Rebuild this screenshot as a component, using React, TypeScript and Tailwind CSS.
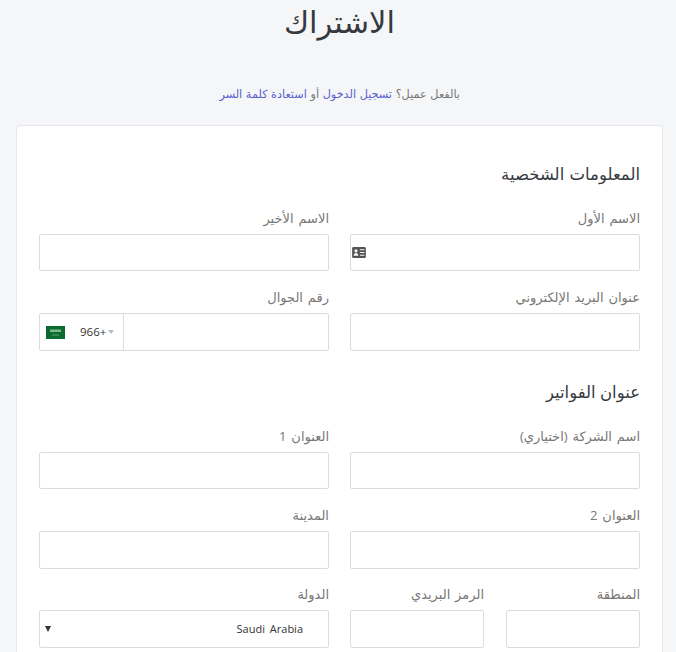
const font = { fontFamily: '"Open Sans", "DejaVu Sans", sans-serif' }

function Field({ label, children, tall, className = '' }: { label: string; children?: React.ReactNode; tall?: boolean; className?: string }) {
  return (
    <div className={className}>
      <label className="block h-[24px] text-[13px] leading-[24px] text-[#777] [word-spacing:1.5px]">{label}</label>
      <div className={`relative mt-[4px] rounded-[2px] border border-[#dcdcdc] bg-white ${tall ? 'h-[38px]' : 'h-[37px]'}`}>{children}</div>
    </div>
  )
}

export default function App() {
  return (
    <div dir="rtl" style={font} className="h-[652px] overflow-hidden bg-[#f5f6f8]">
      <h1 className="h-[42px] pr-[281px] text-right text-[30.5px] leading-[42px] text-[#36393f]">الاشتراك</h1>
      <p className="mt-[41px] h-[22px] pr-[216px] text-[11.25px] leading-[22px] text-[#777] [word-spacing:0.7px]">
        بالفعل عميل؟ <span className="text-[#5a5fd0]">تسجيل الدخول</span> أو{' '}
        <span className="text-[#5a5fd0]">استعادة كلمة السر</span>
      </p>
      <div className="ml-[16px] mr-[13px] mt-[20px] h-[600px] rounded-t-[4px] border border-[#e4e6ea] bg-white px-[22px] pt-[34px]">
        <h2 className="h-[28px] text-[16.5px] leading-[28px] text-[#36393f] [word-spacing:1px]">المعلومات الشخصية</h2>
        <div className="mt-[18px] grid grid-cols-2 gap-x-[21px] gap-y-[14px]">
          <Field label="الاسم الأول">
            <svg width="14" height="11" viewBox="0 0 15 12" className="absolute left-[1px] top-[12px]">
              <rect width="15" height="12" rx="1.5" fill="#555" />
              <circle cx="4.2" cy="4.2" r="1.7" fill="#fff" />
              <path d="M1.8 9.5c0-2 1-3 2.4-3s2.4 1 2.4 3z" fill="#fff" />
              <path d="M8.5 3h5M8.5 6h5M8.5 9h5" stroke="#fff" strokeWidth="1" />
            </svg>
          </Field>
          <Field label="الاسم الأخير" />
          <Field label="عنوان البريد الإلكتروني" tall />
          <Field label="رقم الجوال" tall>
            <div dir="ltr" className="flex h-full items-center">
              <div className="flex h-full w-[84px] items-center border-r border-[#dcdcdc] pl-[6px]">
                <svg width="19" height="13" viewBox="0 0 19 13" className="shrink-0">
                  <rect width="19" height="13" fill="#0b6b2e" />
                  <rect x="4" y="3.5" width="11" height="2.5" fill="#7fb592" />
                  <rect x="6" y="8.5" width="7" height="1" fill="#5f9f76" />
                </svg>
                <span className="ml-[15px] text-[11.5px] text-[#333]">966+</span>
                <span className="ml-[2px] h-0 w-0 border-x-[3px] border-t-[4px] border-x-transparent border-t-[#bbb]" />
              </div>
            </div>
          </Field>
        </div>
        <h2 className="mt-[27px] h-[28px] text-[16.5px] leading-[28px] text-[#36393f]">عنوان الفواتير</h2>
        <div className="mt-[18px] grid grid-cols-2 gap-x-[21px] gap-y-[14px]">
          <Field label="اسم الشركة (اختياري)" />
          <Field label="العنوان 1" />
          <Field label="العنوان 2" tall />
          <Field label="المدينة" tall />
          <div className="-mt-px grid grid-cols-2 gap-x-[22px]">
            <Field label="المنطقة" tall />
            <Field label="الرمز البريدي" tall />
          </div>
          <Field label="الدولة" tall className="-mt-px">
            <div dir="ltr" className="flex h-full items-center justify-between pl-[5px] pr-[25px] text-[11px] text-[#333]">
              <span className="h-0 w-0 border-x-[3px] border-t-[6px] border-x-transparent border-t-[#333]" />
              <span className="[word-spacing:2px]">Saudi Arabia</span>
            </div>
          </Field>
        </div>
      </div>
    </div>
  )
}
